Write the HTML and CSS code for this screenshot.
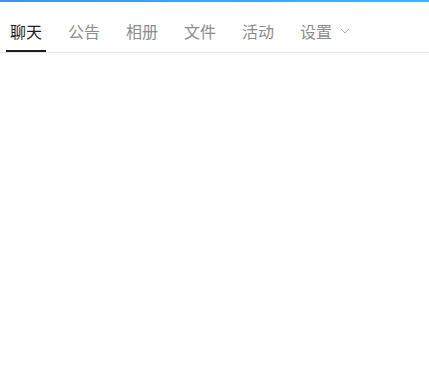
FILE: index.html
```html
<!DOCTYPE html>
<html lang="zh">
<head>
    <meta charset="UTF-8">
    <title>群聊</title>
    <link rel="stylesheet" href="styles.css">
</head>
<body>
    <div class="topbar"></div>
    <div class="tabs">
        <div class="tab active">聊天</div>
        <div class="tab">公告</div>
        <div class="tab">相册</div>
        <div class="tab">文件</div>
        <div class="tab">活动</div>
        <div class="tab">设置
            <svg class="chevron" width="10" height="6" viewBox="0 0 10 6">
                <path d="M1 1 L5 5 L9 1" fill="none" stroke="#b0b0b0" stroke-width="1"/>
            </svg>
        </div>
    </div>
    <div class="content"></div>
</body>
</html>
```

FILE: styles.css
```css
body {
    margin: 0;
    background-color: #ffffff;
    font-family: "Noto Sans CJK SC", "Liberation Sans", sans-serif;
}

.topbar {
    height: 2px;
    background: linear-gradient(to right, #4a8fe3, #3fb6f2);
}

.tabs {
    display: flex;
    gap: 18px;
    padding-left: 6px;
    height: 50px;
    border-bottom: 1px solid #e8e8e8;
}

.tab {
    display: flex;
    align-items: center;
    gap: 8px;
    padding: 9px 4px 0;
    font-size: 16px;
    color: #8c8c8c;
    border-bottom: 2px solid transparent;
}

.tab.active {
    color: #1e1e1e;
    border-bottom-color: #1e1e1e;
}

.chevron {
    margin-top: 1px;
}
```
